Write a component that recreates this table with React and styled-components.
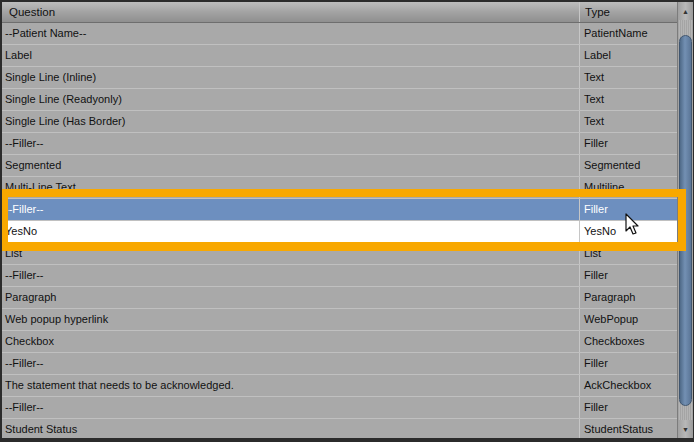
import styled, { createGlobalStyle } from "styled-components";

const GlobalStyle = createGlobalStyle`
  html, body {
    margin: 0;
    padding: 0;
    background: #2b2b2b;
  }
  body {
    font-family: "Liberation Sans", Arial, sans-serif;
  }
`;

const rows = [
  ["--Patient Name--", "PatientName"],
  ["Label", "Label"],
  ["Single Line (Inline)", "Text"],
  ["Single Line (Readyonly)", "Text"],
  ["Single Line (Has Border)", "Text"],
  ["--Filler--", "Filler"],
  ["Segmented", "Segmented"],
  ["Multi-Line Text", "Multiline"],
  ["--Filler--", "Filler", "selected"],
  ["YesNo", "YesNo", "hover"],
  ["List", "List"],
  ["--Filler--", "Filler"],
  ["Paragraph", "Paragraph"],
  ["Web popup hyperlink", "WebPopup"],
  ["Checkbox", "Checkboxes"],
  ["--Filler--", "Filler"],
  ["The statement that needs to be acknowledged.", "AckCheckbox"],
  ["--Filler--", "Filler"],
  ["Student Status", "StudentStatus"],
];

function Cursor() {
  return (
    <svg width="16" height="24" viewBox="0 0 16 24">
      <path
        d="M1 1 L1 18 L5 14 L8 21 L11 20 L8 13 L13 13 Z"
        fill="#fff"
        stroke="#111"
        strokeWidth="1.2"
        strokeLinejoin="round"
      />
    </svg>
  );
}

function App() {
  return (
    <>
      <GlobalStyle />
      <Frame>
        <Grid>
          <HeaderRow>
            <HeadCell>Question</HeadCell>
            <HeadCell $last>Type</HeadCell>
          </HeaderRow>
          {rows.map(([q, t, state], i) => (
            <Row key={i} $state={state}>
              <Cell>{q}</Cell>
              <Cell $last>{t}</Cell>
            </Row>
          ))}
          <Highlight />
          <CursorSpot>
            <Cursor />
          </CursorSpot>
        </Grid>
        <ScrollBar>
          <Arrow>▲</Arrow>
          <Track>
            <Thumb />
          </Track>
          <Arrow>▼</Arrow>
        </ScrollBar>
      </Frame>
    </>
  );
}

export default App;

const Frame = styled.div`
  width: 694px;
  height: 442px;
  box-sizing: border-box;
  border: 2px solid #2b2b2b;
  border-right-width: 1px;
  border-bottom-width: 4px;
  display: flex;
  background: #a9a9a9;
  overflow: hidden;
`;

const Grid = styled.div`
  position: relative;
  flex: 1;
  display: flex;
  flex-direction: column;
`;

const HeaderRow = styled.div`
  display: grid;
  grid-template-columns: 577px 1fr;
  height: 20px;
  background: linear-gradient(#bdbdbd, #a3a3a3 50%, #8f8f8f);
  border-bottom: 1px solid #6e6e6e;
`;

const HeadCell = styled.div`
  font-size: 11.5px;
  color: #111;
  line-height: 20px;
  padding-left: ${(p) => (p.$last ? "5px" : "7px")};
  border-left: ${(p) => (p.$last ? "1px solid #c6c6c6" : "none")};
`;

const Row = styled.div`
  display: grid;
  grid-template-columns: 577px 1fr;
  height: 21px;
  border-bottom: 1px solid #c0c0c0;
  background: ${(p) =>
    p.$state === "selected" ? "#6d8fbf" : p.$state === "hover" ? "#ffffff" : "#a9a9a9"};
  color: ${(p) => (p.$state === "selected" ? "#fff" : "#111")};
`;

const Cell = styled.div`
  font-size: 11px;
  line-height: 21px;
  padding-left: ${(p) => (p.$last ? "4px" : "3px")};
  border-left: ${(p) => (p.$last ? "1px solid #c6c6c6" : "none")};
  white-space: nowrap;
  overflow: hidden;
`;

const Highlight = styled.div`
  position: absolute;
  left: -2px;
  top: 187px;
  width: 686px;
  height: 62px;
  box-sizing: border-box;
  border: 8px solid #f8a800;
  border-bottom-width: 9px;
`;

const CursorSpot = styled.div`
  position: absolute;
  left: 623px;
  top: 211px;
`;

const ScrollBar = styled.div`
  width: 15px;
  display: flex;
  flex-direction: column;
  background: #9c9c9c;
  border-left: 1px solid #7c7c7c;
`;

const Arrow = styled.div`
  height: 18px;
  font-size: 7px;
  color: #333;
  display: flex;
  align-items: center;
  justify-content: center;
  background: linear-gradient(90deg, #a0a0a0, #b8b8b8, #9a9a9a);
`;

const Track = styled.div`
  flex: 1;
  padding: 15px 1px 14px;
  background: repeating-linear-gradient(90deg, #a4a4a4 0 1px, #b4b4b4 1px 2px);
  display: flex;
`;

const Thumb = styled.div`
  flex: 1;
  border-radius: 7px;
  background: linear-gradient(90deg, #4f6a88, #7390b3 45%, #5a7596);
  border: 1px solid #405670;
`;
